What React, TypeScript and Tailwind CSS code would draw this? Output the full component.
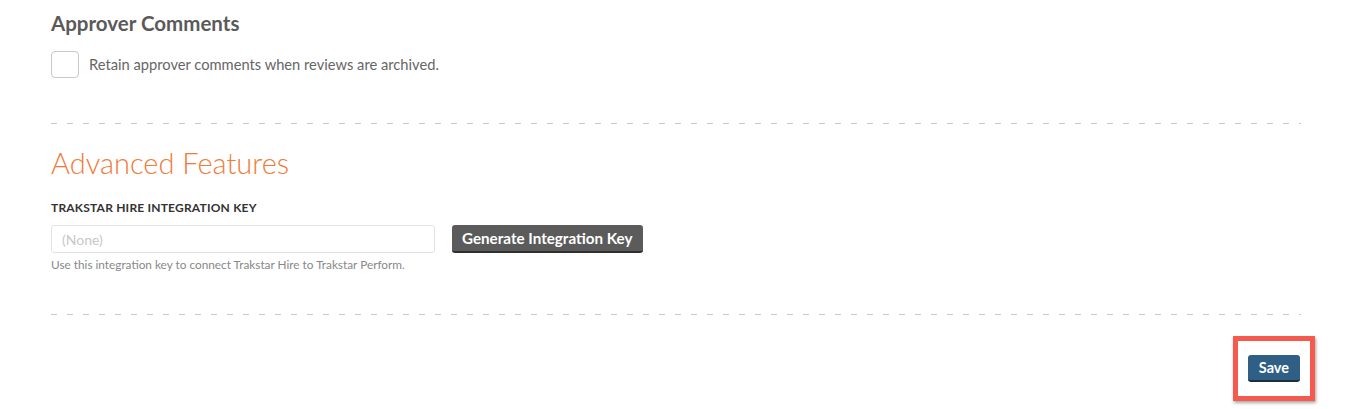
const font = { fontFamily: '"Lato", "Open Sans", sans-serif' };

const Dashed = () => (
  <div
    className="h-px w-full"
    style={{
      backgroundImage: "linear-gradient(to right, #c9c9c9 0 6px, transparent 6px 16px)",
      backgroundSize: "16px 1px",
    }}
  />
);

export default function App() {
  return (
    <div className="w-[1352px] h-[409px] bg-white px-[51px] pt-[12px] text-[#555]" style={font}>
      <h2 className="text-[20.5px] font-bold leading-[22px] text-[#5a5a5a]">Approver Comments</h2>

      <label className="mt-[17px] flex items-center gap-[10px]">
        <span className="w-[28px] h-[27px] rounded-[4px] border border-[#c8c8c8] bg-white" />
        <span className="text-[14.7px] text-[#666]">Retain approver comments when reviews are archived.</span>
      </label>

      <div className="mt-[45px]">
        <Dashed />
      </div>

      <h2 className="mt-[22px] text-[29px] font-light leading-[34px] text-[#f07c3a]">Advanced Features</h2>

      <div className="mt-[19px] text-[12px] font-bold text-[#333] tracking-[0.2px]">TRAKSTAR HIRE INTEGRATION KEY</div>

      <div className="mt-[8px] flex items-center gap-[17px]">
        <input
          readOnly
          placeholder="(None)"
          className="w-[384px] h-[28px] rounded-[3px] border border-[#e2e2e2] px-[10px] text-[14px] placeholder:text-[#c8c8c8] outline-none"
          style={font}
        />
        <button className="h-[28px] px-[10px] rounded-[3px] bg-[#5b5b5b] border-b-2 border-[#2e2e2e] text-white text-[15.2px] font-bold">
          Generate Integration Key
        </button>
      </div>
      <p className="mt-[3px] text-[11.8px] text-[#888]">Use this integration key to connect Trakstar Hire to Trakstar Perform.</p>

      <div className="mt-[40px]">
        <Dashed />
      </div>

      <div className="mt-[21px] flex justify-end mr-[-14px]">
        <div className="border-[5px] border-[#f55a4e] px-[10px] py-[14px] shadow-[1px_2px_3px_rgba(0,0,0,0.35)]">
          <button className="h-[27px] px-[11px] rounded-[3px] bg-[#2f5f85] border-b-2 border-[#1d2f3c] text-white text-[14.5px] font-bold">
            Save
          </button>
        </div>
      </div>
    </div>
  );
}
